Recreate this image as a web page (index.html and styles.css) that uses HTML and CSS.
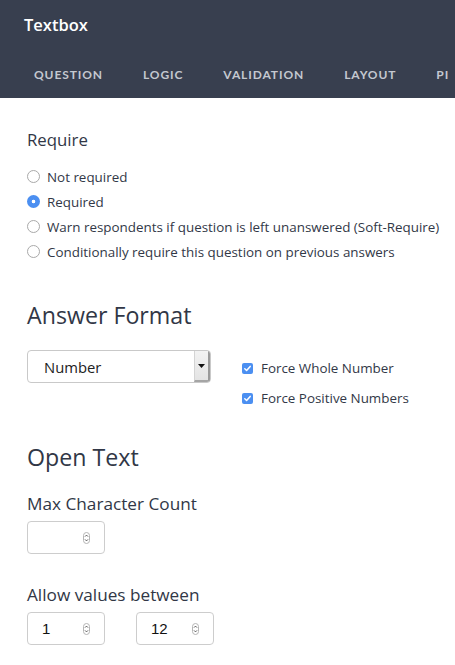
FILE: index.html
```html
<!DOCTYPE html>
<html>
<head>
<meta charset="utf-8">
<link rel="stylesheet" href="styles.css">
</head>
<body>
<header class="top">
  <div class="title">Textbox</div>
  <nav class="tabs">
    <span class="tab">QUESTION</span>
    <span class="tab">LOGIC</span>
    <span class="tab">VALIDATION</span>
    <span class="tab">LAYOUT</span>
    <span class="tab">PI</span>
  </nav>
</header>
<main class="content">
  <h2 class="h-small">Require</h2>
  <ul class="radios">
    <li class="radio-row"><span class="radio"></span>Not required</li>
    <li class="radio-row"><span class="radio checked"></span>Required</li>
    <li class="radio-row"><span class="radio"></span>Warn respondents if question is left unanswered (Soft-Require)</li>
    <li class="radio-row"><span class="radio"></span>Conditionally require this question on previous answers</li>
  </ul>

  <h2 class="h-large format-title">Answer Format</h2>
  <div class="format-row">
    <div class="select">
      <span class="select-text">Number</span>
      <span class="select-btn"><svg width="7" height="4" viewBox="0 0 7 4"><path d="M0 0H7L3.5 4Z" fill="#111"/></svg></span>
    </div>
    <div class="checks">
      <div class="check-row"><span class="checkbox"><svg width="9" height="9" viewBox="0 0 9 9"><path d="M1.8 4.8L3.6 6.5L7.2 2.4" fill="none" stroke="#fff" stroke-width="1.5" stroke-linecap="round" stroke-linejoin="round"/></svg></span>Force Whole Number</div>
      <div class="check-row"><span class="checkbox"><svg width="9" height="9" viewBox="0 0 9 9"><path d="M1.8 4.8L3.6 6.5L7.2 2.4" fill="none" stroke="#fff" stroke-width="1.5" stroke-linecap="round" stroke-linejoin="round"/></svg></span>Force Positive Numbers</div>
    </div>
  </div>

  <h2 class="h-large open-title">Open Text</h2>
  <div class="label">Max Character Count</div>
  <div class="inputs">
    <div class="num"><span class="num-val"></span><span class="spin"><svg width="7" height="12" viewBox="0 0 7 12"><rect x="0.5" y="0.5" width="6" height="11" rx="3" fill="#fff" stroke="#b5b5b5"/><path d="M2 4.6L3.5 3.1L5 4.6M2 7.4L3.5 8.9L5 7.4" fill="none" stroke="#444" stroke-width="0.9"/></svg></span></div>
  </div>
  <div class="label allow">Allow values between</div>
  <div class="inputs">
    <div class="num"><span class="num-val">1</span><span class="spin"><svg width="7" height="12" viewBox="0 0 7 12"><rect x="0.5" y="0.5" width="6" height="11" rx="3" fill="#fff" stroke="#b5b5b5"/><path d="M2 4.6L3.5 3.1L5 4.6M2 7.4L3.5 8.9L5 7.4" fill="none" stroke="#444" stroke-width="0.9"/></svg></span></div>
    <div class="num"><span class="num-val">12</span><span class="spin"><svg width="7" height="12" viewBox="0 0 7 12"><rect x="0.5" y="0.5" width="6" height="11" rx="3" fill="#fff" stroke="#b5b5b5"/><path d="M2 4.6L3.5 3.1L5 4.6M2 7.4L3.5 8.9L5 7.4" fill="none" stroke="#444" stroke-width="0.9"/></svg></span></div>
  </div>
</main>
</body>
</html>
```
FILE: styles.css
```css
* { box-sizing: border-box; }
html, body { margin: 0; padding: 0; background: #fff; }
body {
  font-family: "Open Sans", "Noto Sans", sans-serif;
  color: #323847;
  width: 455px;
  overflow: hidden;
}
.top {
  background: #383f4f;
  height: 98px;
  overflow: hidden;
}
.title {
  height: 50px;
  line-height: 50px;
  padding-left: 24px;
  color: #fff;
  font-size: 16.5px;
  font-weight: 600;
  font-family: "Open Sans", sans-serif;
}
.tabs {
  display: flex;
  height: 48px;
  align-items: center;
  padding-left: 14px;
  white-space: nowrap;
}
.tab {
  flex: none;
  padding: 0 20px;
  color: #c4c8d0;
  font-size: 12px;
  font-weight: 700;
  letter-spacing: 0.9px;
  font-family: "Lato", sans-serif;
}
.content {
  padding-left: 27px;
}
h2 { margin: 0; font-weight: 400; }
.h-small {
  font-size: 16.8px;
  line-height: 20px;
  margin-top: 32px;
  color: #313746;
}
.radios {
  list-style: none;
  margin: 14px 0 0;
  padding: 0;
}
.radio-row {
  display: flex;
  align-items: center;
  height: 25px;
  font-size: 13.4px;
  white-space: nowrap;
}
.radio {
  width: 13px;
  height: 13px;
  border-radius: 50%;
  border: 1px solid #a9a9a9;
  background: #fff;
  margin-right: 7px;
  flex: none;
}
.radio.checked {
  border: none;
  background: #4b8ff1 radial-gradient(circle, #fff 0 1.6px, transparent 2.1px);
}
.h-large {
  font-size: 23.2px;
  line-height: 28px;
  color: #313746;
}
.format-title { margin-top: 37px; }
.format-row {
  display: flex;
  margin-top: 21px;
  gap: 31px;
}
.select {
  width: 184px;
  height: 33px;
  border: 1px solid #c9c9c9;
  border-radius: 4px;
  display: flex;
  align-items: center;
  justify-content: space-between;
  padding-left: 16px;
  overflow: hidden;
}
.select-text { font-size: 14.8px; color: #222; }
.select-btn {
  width: 16px;
  height: 31px;
  background: linear-gradient(#f2f2f2, #e4e4e4);
  border-left: 1px solid #d4d4d4;
  border-right: 2px solid #9a9a9a;
  border-bottom: 2px solid #a5a5a5;
  display: flex;
  align-items: center;
  justify-content: center;
}
.checks { padding-top: 3px; }
.check-row {
  display: flex;
  align-items: center;
  height: 30px;
  font-size: 13.4px;
  white-space: nowrap;
}
.checkbox {
  width: 11px;
  height: 11px;
  border-radius: 2px;
  background: #4b8ff1;
  margin-right: 8px;
  display: flex;
  align-items: center;
  justify-content: center;
}
.open-title { margin-top: 30px; }
.label {
  font-size: 17.2px;
  line-height: 22px;
  margin-top: 22px;
  color: #313746;
}
.label.allow { margin-top: 30px; }
.inputs {
  display: flex;
  gap: 31px;
  margin-top: 6px;
}
.num {
  width: 78px;
  height: 33px;
  border: 1px solid #cdcdcd;
  border-radius: 4px;
  display: flex;
  align-items: center;
  padding-left: 14px;
  padding-right: 14px;
  justify-content: space-between;
}
.num-val {
  font-family: "Liberation Sans", Arial, sans-serif;
  font-size: 15px;
  color: #111;
}
.spin { display: flex; }
```
